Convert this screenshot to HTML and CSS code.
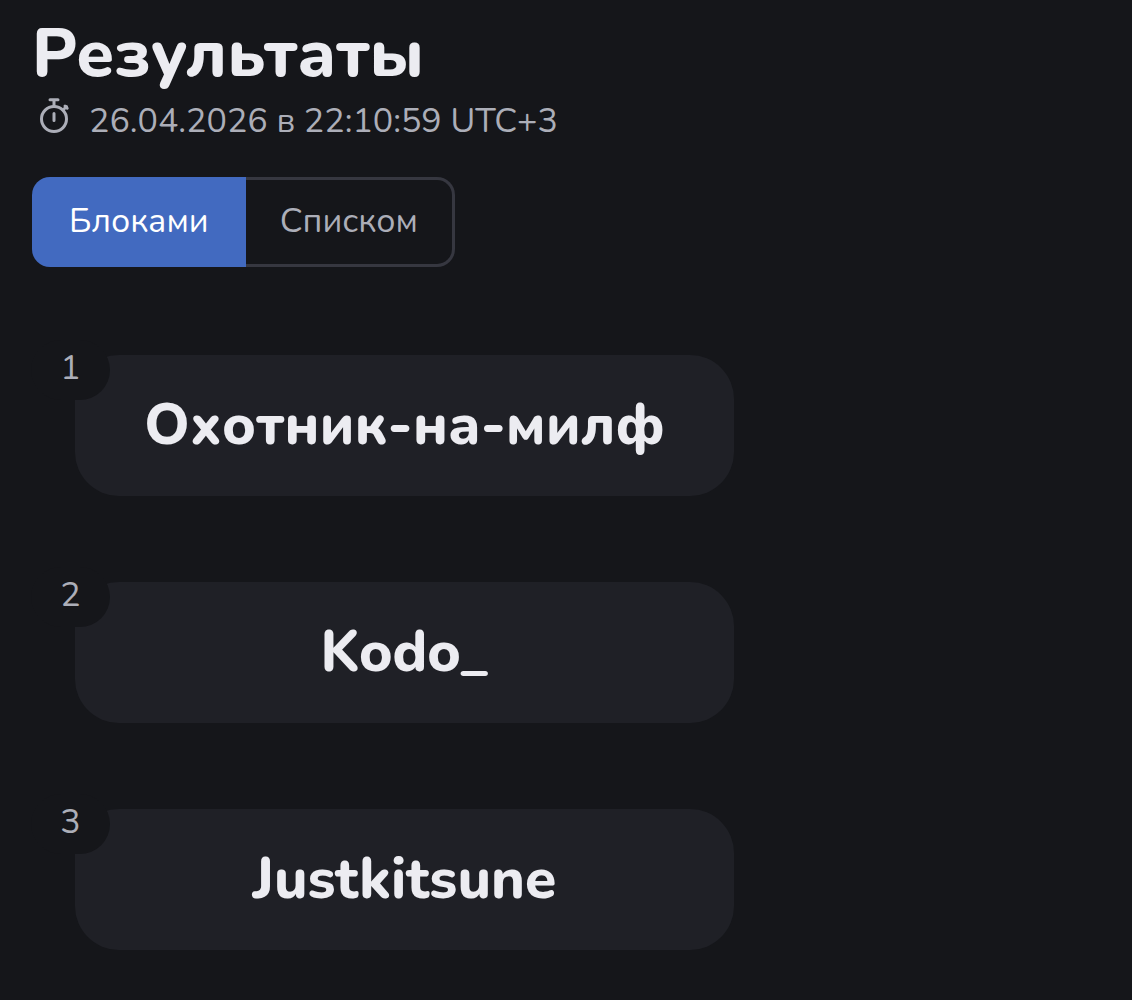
FILE: index.html
```html
<!DOCTYPE html>
<html lang="ru">
<head>
  <meta charset="UTF-8">
  <meta name="viewport" content="width=device-width, initial-scale=1.0">
  <title>Результаты</title>
  <link rel="stylesheet" href="styles.css">
</head>
<body>
  <header class="header">
    <h1>Результаты</h1>
    <p class="date">
      <svg class="timer" viewBox="0 0 32 36" fill="none" stroke="currentColor" stroke-width="3" stroke-linecap="round" aria-hidden="true">
        <circle cx="15" cy="21" r="12.5"/>
        <path d="M11 1.800h8M15 2v6M15 15.500v7M24 12l3.500-3.500M26 8l2.200 2.200"/>
      </svg>
      <time datetime="2026-04-26T22:10:59+03:00">26.04.2026 в 22:10:59 UTC+3</time>
    </p>
  </header>

  <div class="switch">
    <button type="button" class="switch-btn active">Блоками</button>
    <button type="button" class="switch-btn">Списком</button>
  </div>

  <main class="results">
    <section class="card">
      <span class="place">1</span>
      <h2>Охотник-на-милф</h2>
    </section>
    <section class="card">
      <span class="place">2</span>
      <h2>Kodo_</h2>
    </section>
    <section class="card">
      <span class="place">3</span>
      <h2>Justkitsune</h2>
    </section>
  </main>
</body>
</html>
```

FILE: styles.css
```css
* {
  box-sizing: border-box;
}

body {
  margin: 0;
  padding: 16px 32px 48px;
  background-color: #15161a;
  color: #ececf1;
  font-family: Nunito, "Open Sans", "Noto Sans", sans-serif;
}

h1 {
  margin: 0;
  font-size: 68px;
  line-height: 76px;
  font-weight: 800;
}

.date {
  display: flex;
  gap: 18px;
  margin: 0;
  padding-left: 7px;
  color: #acaeb8;
  font-size: 34px;
  line-height: 58px;
}

.timer {
  width: 32px;
  height: 36px;
  margin-top: 6px;
}

.switch {
  display: flex;
  width: fit-content;
  margin-top: 27px;
}

.switch-btn {
  height: 90px;
  padding: 0 34px 2px;
  border: 3px solid #363740;
  border-left: none;
  border-radius: 0 18px 18px 0;
  background: none;
  color: #acaeb8;
  font-family: inherit;
  font-size: 34px;
  cursor: pointer;
}

.switch-btn.active {
  padding: 0 37px 2px;
  border: none;
  border-radius: 18px 0 0 18px;
  background-color: #426ac0;
  color: #fff;
}

.results {
  display: flex;
  flex-direction: column;
  gap: 86px;
  max-width: 702px;
  margin-top: 88px;
  padding-left: 43px;
}

.card {
  position: relative;
  padding: 34px 24px 35px;
  border-radius: 44px;
  background-color: #1f2026;
  text-align: center;
}

.card h2 {
  margin: 0;
  font-size: 57px;
  line-height: 72px;
  font-weight: 800;
}

/* cuts the corner of the card */
.place {
  position: absolute;
  top: -15px;
  left: -44px;
  width: 79px;
  height: 60px;
  border-radius: 30px;
  background-color: #15161a;
  color: #acaeb8;
  font-size: 34px;
  line-height: 56px;
}

@media (max-width: 600px) {
  h1 {
    font-size: 44px;
  }

  .date {
    font-size: 22px;
  }

  .card h2 {
    font-size: 32px;
  }
}
```
